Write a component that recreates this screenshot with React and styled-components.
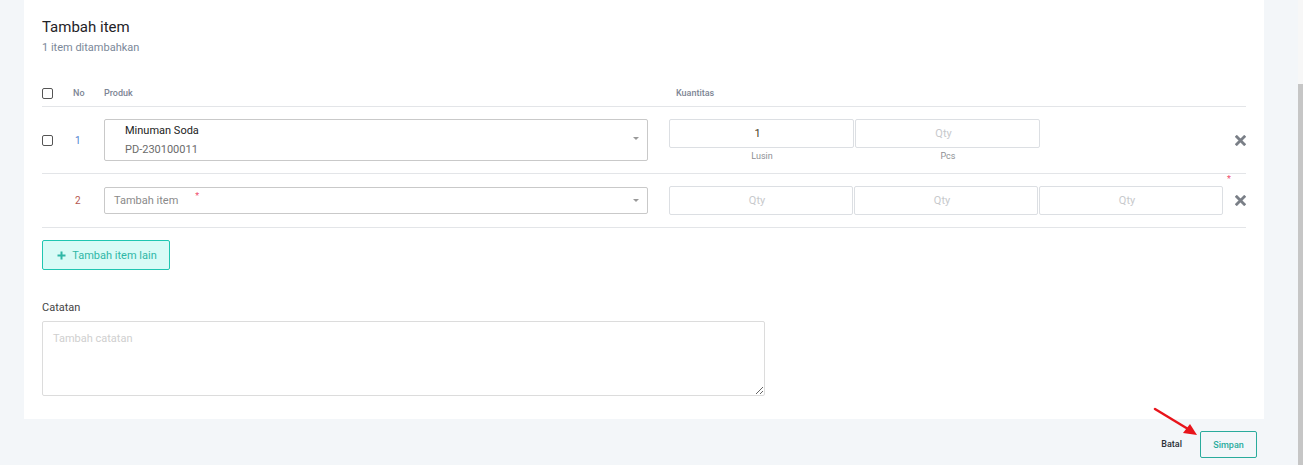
import * as React from "react"
import styled, { createGlobalStyle } from "styled-components"

const GlobalStyle = createGlobalStyle`
  html, body {
    margin: 0;
    padding: 0;
    background: #f3f6f9;
    font-family: Roboto, "Noto Sans", "Liberation Sans", sans-serif;
    overflow: hidden;
  }
  * { box-sizing: border-box; }
`

const Screen = styled.div`
  display: flex;
  width: 1303px;
  height: 465px;
  position: relative;
`

const Main = styled.div`
  flex: 1;
  display: flex;
  flex-direction: column;
  padding: 0 34px 0 24px;
`

const ScrollTrack = styled.div`
  width: 5px;
  display: flex;
  flex-direction: column;
  background: #f7f7f7;
  padding-top: 84px;
`

const ScrollThumb = styled.div`
  flex: 1;
  background: #c6c6c6;
`

const Card = styled.div`
  background: #fff;
  height: 419px;
  padding: 18px 18px 0 18px;
`

const Title = styled.div`
  font-size: 15px;
  font-weight: 400;
  color: #1f2328;
  line-height: 18px;
`

const Subtitle = styled.div`
  font-size: 11px;
  color: #7b8899;
  margin-top: 5px;
  line-height: 14px;
`

const Grid = styled.div`
  display: grid;
  grid-template-columns: 31px 31px 544px 21px 555px 22px;
  align-items: center;
  border-bottom: 1px solid #e3e5e8;
  height: ${p => p.$h}px;
  padding: ${p => p.$pad || "0"};
`

const Header = styled(Grid)`
  margin-top: 31px;
  align-items: start;
  padding-top: 2px;
`

const HeadText = styled.div`
  font-size: 9px;
  font-weight: 500;
  color: #7d8594;
  grid-column: ${p => p.$col};
  margin-left: ${p => p.$ml || 0}px;
`

const Check = styled.span`
  display: block;
  width: 11px;
  height: 11px;
  border: 1px solid #555;
  border-radius: 2px;
`

const Num = styled.div`
  font-size: 10px;
  color: ${p => p.$color};
  grid-column: 2;
  padding-left: ${p => p.$pl}px;
`

const Select = styled.div`
  grid-column: 3;
  border: 1px solid ${p => p.$border};
  border-radius: 2px;
  height: ${p => p.$h}px;
  display: flex;
  align-items: center;
  justify-content: space-between;
  padding: 0 8px 0 ${p => p.$pl}px;
`

const SelectValue = styled.div`
  display: flex;
  flex-direction: column;
  gap: 6px;
`

const ProductName = styled.div`
  font-size: 11px;
  color: #222;
  line-height: 13px;
`

const ProductCode = styled.div`
  font-size: 11px;
  color: #6b6b6b;
  line-height: 13px;
`

const Placeholder = styled.div`
  font-size: 11px;
  color: #8a8a8a;
  display: flex;
  align-items: flex-start;
`

const Star = styled.span`
  color: #f0506e;
  font-size: 9px;
  margin-left: ${p => p.$ml || 0}px;
  margin-top: -3px;
`

const Caret = styled.span`
  width: 0;
  height: 0;
  border-left: 3.5px solid transparent;
  border-right: 3.5px solid transparent;
  border-top: 3.5px solid #999;
`

const QtyArea = styled.div`
  grid-column: 5;
  display: flex;
  align-self: ${p => (p.$top ? "start" : "center")};
`

const QtyCol = styled.div`
  display: flex;
  flex-direction: column;
  align-items: center;
`

const QtyBox = styled.div`
  width: 185px;
  height: 29px;
  border: 1px solid #dcdfe3;
  border-radius: 2px;
  display: flex;
  align-items: center;
  justify-content: center;
  padding-right: 8px;
  font-size: 11px;
  color: ${p => (p.$filled ? "#4a3a24" : "#c7c9cc")};
  margin-right: 1px;
`

const UnitLabel = styled.div`
  font-size: 9px;
  color: #8d8f93;
  margin-top: 3px;
`

const RemoveCell = styled.div`
  grid-column: 6;
  display: flex;
  justify-content: flex-end;
  position: relative;
`

const RemoveStar = styled.span`
  position: absolute;
  color: #f0506e;
  font-size: 9px;
  right: 15px;
  top: -21px;
`

const AddButton = styled.button`
  margin-top: 12px;
  width: 128px;
  height: 30px;
  background: #d8fbf6;
  border: 1px solid #1fc6b1;
  border-radius: 2px;
  color: #2fb7a6;
  font-family: inherit;
  font-size: 11px;
  display: flex;
  align-items: center;
  justify-content: center;
  gap: 6px;
  padding: 0 0 0 2px;
`

const NoteLabel = styled.div`
  margin-top: 31px;
  font-size: 11px;
  color: #444;
`

const NoteArea = styled.textarea`
  display: block;
  margin-top: 7px;
  width: 723px;
  height: 75px;
  border: 1px solid #dcdcdc;
  border-radius: 2px;
  padding: 10px 10px;
  font-family: inherit;
  font-size: 11px;
  resize: vertical;
  outline: none;
  &::placeholder { color: #cfcfcf; }
`

const Footer = styled.div`
  display: flex;
  justify-content: flex-end;
  align-items: center;
  padding: 12px 7px 0 0;
  gap: 18px;
`

const CancelText = styled.div`
  font-size: 9px;
  font-weight: 500;
  color: #2a2f36;
  margin-top: -1px;
`

const SaveButton = styled.button`
  width: 57px;
  height: 27px;
  background: transparent;
  border: 1px solid #2aab9c;
  border-radius: 2px;
  color: #2aab9c;
  font-family: inherit;
  font-size: 9px;
  font-weight: 500;
  padding: 0;
`

const Arrow = styled.svg`
  position: absolute;
  left: 1150px;
  top: 405px;
`

const CrossIcon = () => (
  <svg width="11" height="11" viewBox="0 0 11 11">
    <path d="M1.8 1.8 L9.2 9.2 M9.2 1.8 L1.8 9.2" stroke="#7a7f87" strokeWidth="2.8" strokeLinecap="square" />
  </svg>
)

const PlusIcon = () => (
  <svg width="9" height="9" viewBox="0 0 9 9">
    <path d="M4.5 0.5 V8.5 M0.5 4.5 H8.5" stroke="#2fb7a6" strokeWidth="2" />
  </svg>
)

export default function App() {
  return (
    <>
      <GlobalStyle />
      <Screen>
        <Main>
          <Card>
            <Title>Tambah item</Title>
            <Subtitle>1 item ditambahkan</Subtitle>

            <Header $h={21}>
              <Check />
              <HeadText $col={2}>No</HeadText>
              <HeadText $col={3}>Produk</HeadText>
              <HeadText $col={5} $ml={7}>Kuantitas</HeadText>
            </Header>

            <Grid $h={67} $pad="12px 0 0 0">
              <Check style={{ alignSelf: "center", marginTop: -12 }} />
              <Num $color="#4f7fd0" $pl={2} style={{ marginTop: -12 }}>1</Num>
              <Select $border="#c9c9c9" $h={42} $pl={20} style={{ alignSelf: "start" }}>
                <SelectValue>
                  <ProductName>Minuman Soda</ProductName>
                  <ProductCode>PD-230100011</ProductCode>
                </SelectValue>
                <Caret style={{ marginTop: -4 }} />
              </Select>
              <QtyArea $top>
                <QtyCol>
                  <QtyBox $filled>1</QtyBox>
                  <UnitLabel>Lusin</UnitLabel>
                </QtyCol>
                <QtyCol>
                  <QtyBox>Qty</QtyBox>
                  <UnitLabel>Pcs</UnitLabel>
                </QtyCol>
              </QtyArea>
              <RemoveCell style={{ marginTop: -12 }}>
                <CrossIcon />
              </RemoveCell>
            </Grid>

            <Grid $h={54}>
              <span />
              <Num $color="#b5574f" $pl={2}>2</Num>
              <Select $border="#c9c9c9" $h={27} $pl={9}>
                <Placeholder>
                  Tambah item<Star $ml={17}>*</Star>
                </Placeholder>
                <Caret />
              </Select>
              <QtyArea>
                <QtyBox>Qty</QtyBox>
                <QtyBox>Qty</QtyBox>
                <QtyBox>Qty</QtyBox>
              </QtyArea>
              <RemoveCell>
                <RemoveStar>*</RemoveStar>
                <CrossIcon />
              </RemoveCell>
            </Grid>

            <AddButton>
              <PlusIcon />
              Tambah item lain
            </AddButton>

            <NoteLabel>Catatan</NoteLabel>
            <NoteArea placeholder="Tambah catatan" />
          </Card>

          <Footer>
            <CancelText>Batal</CancelText>
            <SaveButton>Simpan</SaveButton>
          </Footer>
        </Main>
        <ScrollTrack>
          <ScrollThumb />
        </ScrollTrack>

        <Arrow width="52" height="36" viewBox="0 0 52 36">
          <path d="M5 4 L38 24" stroke="#e8141b" strokeWidth="2.4" strokeLinecap="round" />
          <path d="M47 30 L33 28 L40 19 Z" fill="#e8141b" />
        </Arrow>
      </Screen>
    </>
  )
}
